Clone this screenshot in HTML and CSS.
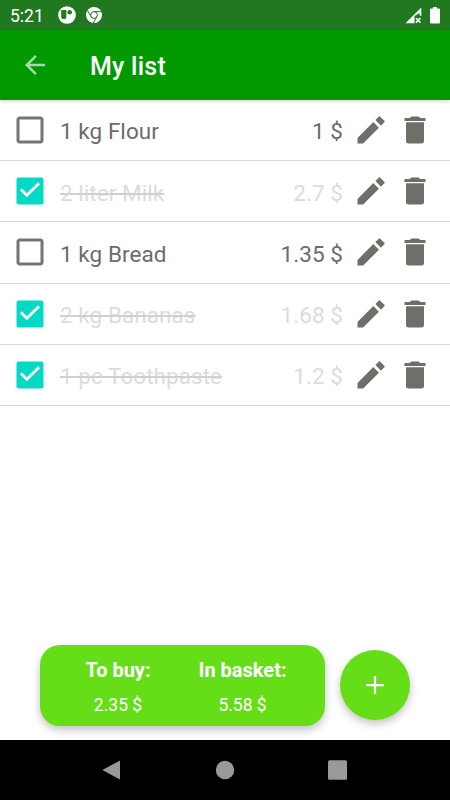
FILE: index.html
```html
<!DOCTYPE html>
<html lang="en">
<head>
  <meta charset="UTF-8" />
  <meta name="viewport" content="width=device-width,initial-scale=1.0" />
  <title>My list</title>
  <link rel="stylesheet" href="styles.css">
</head>
<body>
  <svg class="sprite" width="0" height="0" aria-hidden="true">
    <symbol id="box" viewBox="0 0 24 24">
      <path d="M19 5v14H5V5h14m0-2H5c-1.1 0-2 .9-2 2v14c0 1.1.9 2 2 2h14c1.1 0 2-.9 2-2V5c0-1.1-.9-2-2-2z"/>
    </symbol>
    <symbol id="box-checked" viewBox="0 0 24 24">
      <rect x="3" y="3" width="18" height="18" rx="1.5"/>
      <path d="M5.9 10.9l4 4 8.1-8.1" fill="none" stroke="#fff" stroke-width="1.9"/>
    </symbol>
    <symbol id="edit" viewBox="0 0 24 24">
      <path d="M3 17.25V21h3.75L17.3 10.45l-3.75-3.75L3 17.25zM20.9 6.85c.3-.3.3-.65 0-.95l-2.8-2.8c-.3-.3-.65-.3-.95 0l-2.25 2.25 3.75 3.75 2.25-2.25z"/>
    </symbol>
    <symbol id="trash" viewBox="0 0 24 24">
      <path d="M6 19.5c0 .85.65 1.5 1.5 1.5h9c.85 0 1.5-.65 1.5-1.5V6.9H6v12.6zM19 4h-3.5l-1-1h-5l-1 1H5v2h14V4z"/>
    </symbol>
  </svg>

  <div class="screen">
    <div class="status-bar">
      <span class="clock">5:21</span>
      <svg class="status-app" width="18" height="18" viewBox="0 0 18 18">
        <circle cx="9" cy="9" r="8.8" fill="#fff"/>
        <path d="M3.2 4h5.2v6.4a2.6 2.6 0 0 1-5.2 0z" fill="#20791f"/>
        <circle cx="11.7" cy="6.2" r="2.3" fill="#20791f"/>
      </svg>
      <svg class="status-chrome" width="18" height="18" viewBox="0 0 18 18">
        <circle cx="9" cy="9" r="8" fill="#fff"/>
        <g fill="none" stroke="#20791f" stroke-width="1">
          <circle cx="9" cy="9" r="3.4"/>
          <path d="M9 5.6h7.4M6.1 10.7L2.4 4.3M11.9 10.7L8.2 17"/>
        </g>
      </svg>
      <svg class="status-signal" width="17" height="17" viewBox="0 0 17 17">
        <path d="M16.3.5v8.3h-1.6V6L9.5 9v7.3H.5z" fill="#fff"/>
        <path d="M10.9 11l4.5 4.6M15.4 11l-4.5 4.6" stroke="#fff" stroke-width="1.6"/>
      </svg>
      <svg class="status-battery" width="10" height="17" viewBox="0 0 10 17">
        <path d="M3 0h4v1.6h2a1 1 0 0 1 1 1v13a1 1 0 0 1-1 1H1a1 1 0 0 1-1-1v-13a1 1 0 0 1 1-1h2z" fill="#fff"/>
      </svg>
    </div>

    <div class="app-bar">
      <svg class="back" width="30" height="30" viewBox="0 0 24 24">
        <path d="M20 11H7.83l5.59-5.59L12 4l-8 8 8 8 1.41-1.41L7.83 13H20v-2z"/>
      </svg>
      <h1>My list</h1>
    </div>

    <ul class="list">
      <li class="item">
        <svg class="check"><use href="#box"/></svg>
        <span class="name">1 kg Flour</span>
        <span class="price">1 $</span>
        <svg class="icon"><use href="#edit"/></svg>
        <svg class="icon"><use href="#trash"/></svg>
      </li>
      <li class="item done">
        <svg class="check"><use href="#box-checked"/></svg>
        <span class="name">2 liter Milk</span>
        <span class="price">2.7 $</span>
        <svg class="icon"><use href="#edit"/></svg>
        <svg class="icon"><use href="#trash"/></svg>
      </li>
      <li class="item">
        <svg class="check"><use href="#box"/></svg>
        <span class="name">1 kg Bread</span>
        <span class="price">1.35 $</span>
        <svg class="icon"><use href="#edit"/></svg>
        <svg class="icon"><use href="#trash"/></svg>
      </li>
      <li class="item done">
        <svg class="check"><use href="#box-checked"/></svg>
        <span class="name">2 kg Bananas</span>
        <span class="price">1.68 $</span>
        <svg class="icon"><use href="#edit"/></svg>
        <svg class="icon"><use href="#trash"/></svg>
      </li>
      <li class="item done">
        <svg class="check"><use href="#box-checked"/></svg>
        <span class="name">1 pc Toothpaste</span>
        <span class="price">1.2 $</span>
        <svg class="icon"><use href="#edit"/></svg>
        <svg class="icon"><use href="#trash"/></svg>
      </li>
    </ul>

    <div class="bottom">
      <div class="totals">
        <div class="total">
          <strong>To buy:</strong>
          <span>2.35 $</span>
        </div>
        <div class="total">
          <strong>In basket:</strong>
          <span>5.58 $</span>
        </div>
      </div>
      <button class="add" aria-label="Add item">
        <svg width="30" height="30" viewBox="0 0 24 24">
          <path d="M19.2 12.9h-6.3v6.3h-1.8v-6.3H4.8v-1.8h6.3V4.8h1.8v6.3h6.3z"/>
        </svg>
      </button>
    </div>

    <div class="nav-bar">
      <svg width="20" height="20" viewBox="0 0 20 20"><path d="M18 .5v19L1.2 10.6q-1-.6 0-1.2z"/></svg>
      <svg width="20" height="20" viewBox="0 0 20 20"><circle cx="10" cy="10" r="9.2"/></svg>
      <svg width="20" height="20" viewBox="0 0 20 20"><rect y=".2" width="19" height="19.5" rx="1.5"/></svg>
    </div>
  </div>
</body>
</html>
```
FILE: styles.css
```css
* {
  box-sizing: border-box;
}
body {
  margin: 0;
  font-family: Roboto, sans-serif;
  background-color: #fff;
}
svg {
  display: block;
  flex: none;
}
.sprite { position: absolute; }
.screen {
  display: flex;
  flex-direction: column;
  width: 450px;
  height: 800px;
  overflow: hidden;
}
.status-bar {
  display: flex;
  align-items: center;
  height: 30px;
  padding: 0 10px;
  background-color: #20791f;
  color: #fff;
}
.clock {
  width: 48px;
  font-size: 17.5px;
  line-height: 30px;
  padding-top: 2px;
}
.status-chrome { margin-left: 9px; }
.status-signal { margin-left: auto; }
.status-battery { margin-left: 8px; }
.app-bar {
  display: flex;
  align-items: center;
  height: 70px;
  padding-left: 20px;
  background-color: #009a00;
  box-shadow: 0 1px 4px rgba(0,0,0,0.2);
  color: #fff;
}
.back { fill: #a6dba6; }
.app-bar h1 {
  margin: 3px 0 0 40px;
  font-size: 25px;
  font-weight: 500;
  letter-spacing: 0.25px;
}
.list {
  flex: 1;
  margin: 0;
  padding: 0;
  list-style: none;
}
.item {
  display: flex;
  align-items: center;
  height: 61.2px;
  padding: 0 17px 0 12px;
  border-bottom: 1px solid #d8d8d8;
  color: #6c6c6c;
  font-size: 22.5px;
  letter-spacing: 0.05px;
}
.check {
  width: 36px;
  height: 36px;
  margin-right: 12px;
  fill: #757575;
}
.name, .price { padding-top: 2.5px; }
.name { flex: 1; }
.price { margin-right: 10px; }
.icon {
  width: 36px;
  height: 36px;
  fill: #6e6f69;
}
.icon + .icon { margin-left: 8px; }
.done { color: #dcdcdc; }
.done .check { fill: #03dac5; }
.done .name {
  text-decoration: line-through;
  text-decoration-color: #d0d0d0;
}
.bottom {
  display: flex;
  align-items: center;
  gap: 15px;
  height: 95px;
  padding: 0 40px 15px;
}
.totals {
  display: flex;
  justify-content: center;
  gap: 48px;
  width: 285px;
  height: 81px;
  padding: 12px 0 0 7px;
  border-radius: 20px;
  background-color: #65de17;
  box-shadow: 0 4px 8px rgba(0,0,0,0.24);
  color: #fff;
}
.total {
  display: flex;
  flex-direction: column;
  align-items: center;
  font-size: 17.5px;
}
.total strong {
  margin-bottom: 12px;
  font-size: 20px;
  line-height: 26px;
}
.add {
  display: flex;
  align-items: center;
  justify-content: center;
  width: 70px;
  height: 70px;
  padding: 0;
  border: none;
  border-radius: 50%;
  background-color: #65de17;
  box-shadow: 0 4px 8px rgba(0,0,0,0.24);
  cursor: pointer;
}
.add svg { fill: #fff; }
.nav-bar {
  display: flex;
  align-items: center;
  justify-content: center;
  gap: 93px;
  height: 60px;
  background-color: #000;
}
.nav-bar svg { fill: #999; }
```
